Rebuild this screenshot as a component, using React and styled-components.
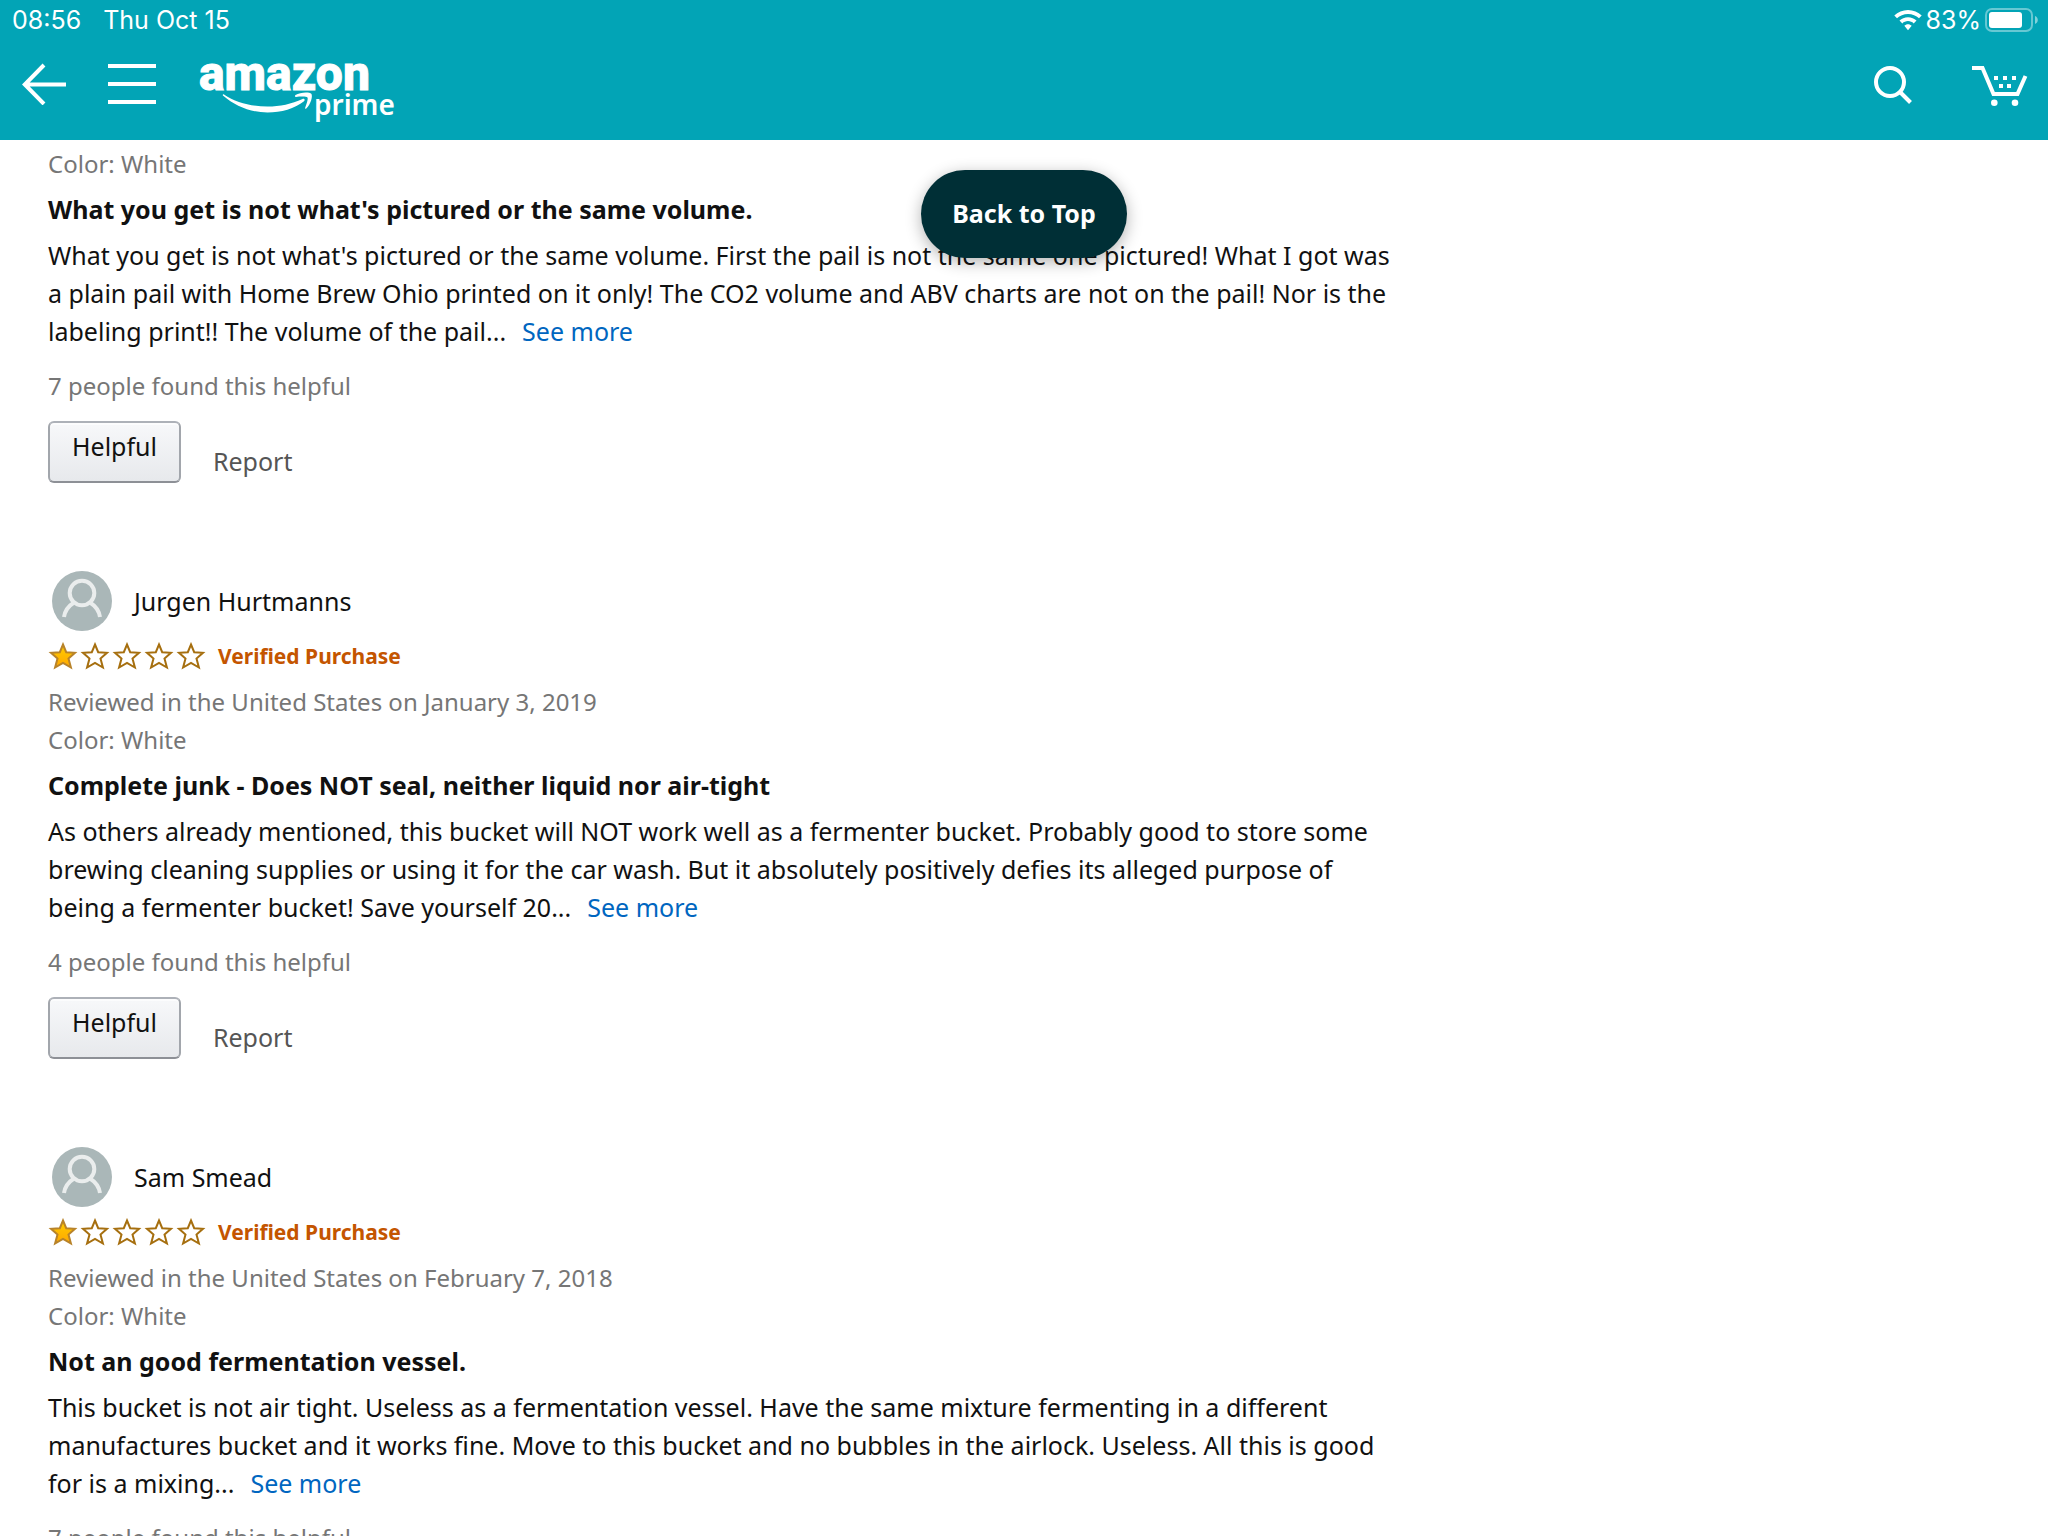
import React from 'react';
import styled, { createGlobalStyle, css } from 'styled-components';

const GlobalStyle = createGlobalStyle`
  * {
    box-sizing: border-box;
  }

  body {
    margin: 0;
    background: #fff;
    color: #111;
    font-family: "Noto Sans", "Open Sans", sans-serif;
    font-size: 25px;
    line-height: 38px;
  }

  h3, p {
    margin: 0;
  }

  svg {
    display: block;
  }
`;

const resetButton = css`
  padding: 0;
  border: 0;
  background: none;
  color: inherit;
  font: inherit;
  cursor: pointer;
`;

const Screen = styled.div`
  display: flex;
  flex-direction: column;
  height: 100vh;
`;

const Header = styled.header`
  flex: none;
  padding-bottom: 12px;
  background: #02a4b6;
  color: #fff;
`;

const StatusBar = styled.div`
  display: flex;
  justify-content: space-between;
  height: 40px;
  padding: 0 10px 0 12px;
  font-family: Inter, sans-serif;
  font-size: 25px;
  line-height: 40px;
`;

const StatusGroup = styled.div`
  display: flex;
  align-items: center;
  gap: ${p => p.gap}px;
`;

const NavBar = styled.nav`
  display: flex;
  align-items: center;
  justify-content: space-between;
  height: 88px;
  padding: 0 20px 0 22px;
`;

const NavGroup = styled.div`
  display: flex;
  align-items: center;
  gap: ${p => p.gap}px;
`;

const IconButton = styled.button`
  ${resetButton};
`;

const LogoLink = styled.a`
  color: inherit;
`;

const LogoText = styled.text`
  fill: currentColor;
  stroke: currentColor;
  stroke-width: ${p => p.sub ? 0 : 1}px;
  font-family: ${p => p.sub ? '"Noto Sans"' : 'Roboto'}, sans-serif;
  font-size: ${p => p.sub ? 28 : 48}px;
  font-weight: ${p => p.sub ? 600 : 800};
`;

const TopAnchor = styled.div`
  position: absolute;
  top: 170px;
  left: 0;
  right: 0;
  display: flex;
  justify-content: center;
  pointer-events: none;
`;

const TopButton = styled.button`
  ${resetButton};
  height: 88px;
  padding: 0 31px 3px;
  border-radius: 44px;
  background: #002f36;
  box-shadow: 0 4px 16px rgba(0, 0, 0, 0.3);
  color: #fff;
  font-weight: 700;
  pointer-events: auto;
`;

const Reviews = styled.main`
  flex: 1;
  min-height: 0;
  padding: 5px 48px 0;
  overflow-y: auto;
  scrollbar-width: none;
`;

const Review = styled.article`
  margin-bottom: 88px;
`;

const Profile = styled.div`
  display: flex;
  align-items: center;
  gap: 22px;
  margin: 0 4px 6px;
`;

const Rating = styled.div`
  display: flex;
  align-items: center;
  gap: 12px;
  margin-bottom: 8px;
`;

const Stars = styled.div`
  display: flex;
  gap: 2px;
`;

const Verified = styled.span`
  color: #c45500;
  font-size: 21px;
  font-weight: 700;
`;

const Meta = styled.p`
  color: #767676;
  font-size: 24px;
`;

const Title = styled.h3`
  margin: 7px 0 8px;
  font-size: 25px;
  font-weight: 700;
`;

const Body = styled.p`
  margin-bottom: 17px;
  white-space: pre-line;
`;

const SeeMore = styled.a`
  margin-left: 16px;
  color: #0066c0;
  text-decoration: none;
`;

const Actions = styled.div`
  display: flex;
  gap: 32px;
  margin-top: 16px;
`;

const HelpfulButton = styled.button`
  ${resetButton};
  height: 62px;
  padding: 0 22px 13px;
  border: 2px solid #a2a6ac;
  border-color: #adb1b8 #a2a6ac #8d9096;
  border-radius: 6px;
  background: linear-gradient(#f7f8fa, #e7e9ec);
  box-shadow: inset 0 2px 0 rgba(255, 255, 255, 0.6);
`;

const ReportLink = styled.a`
  padding-top: 21px;
  color: #555;
  text-decoration: none;
`;

const WifiIcon = () => (
  <svg width="28" height="21" viewBox="0 0 28 21" fill="currentColor">
    <path d="M14 0C8.700 0 3.800 2.100 0.300 5.500L3 8.300C5.800 5.600 9.700 4 14 4s8.200 1.600 11 4.300l2.700-2.800C24.200 2.100 19.300 0 14 0z" />
    <path d="M14 7.200c-3.300 0-6.300 1.300-8.500 3.400l2.800 2.800c1.500-1.400 3.500-2.300 5.700-2.300s4.200.9 5.700 2.300l2.800-2.800c-2.200-2.100-5.200-3.400-8.500-3.400z" />
    <path d="M14 14.200c-1.400 0-2.700.6-3.700 1.500L14 20.300l3.700-4.600c-1-.9-2.300-1.500-3.700-1.500z" />
  </svg>
);

const BatteryIcon = () => (
  <svg width="53" height="24" viewBox="0 0 53 24">
    <rect x="1" y="1" width="46" height="22" rx="6" fill="none" stroke="#fff" strokeOpacity="0.4" strokeWidth="2" />
    <rect x="4" y="4" width="33" height="16" rx="3" fill="#fff" />
    <path d="M50 8c1.700.6 2.800 2.200 2.800 4s-1.100 3.400-2.800 4z" fill="#fff" fillOpacity="0.5" />
  </svg>
);

const BackIcon = () => (
  <svg width="44" height="42" viewBox="0 0 44 42" fill="none" stroke="currentColor" strokeWidth="4">
    <path d="M44 21.500H3M22 2L2.800 21.500L22 41" />
  </svg>
);

const MenuIcon = () => (
  <svg width="48" height="40" viewBox="0 0 48 40" fill="none" stroke="currentColor" strokeWidth="4">
    <path d="M0 2h48M0 20h48M0 38h48" />
  </svg>
);

const SearchIcon = () => (
  <svg width="40" height="40" viewBox="0 0 40 40" fill="none" stroke="currentColor" strokeWidth="4">
    <circle cx="17" cy="18" r="14" />
    <path d="M26.500 27.500L37.500 38.500" />
  </svg>
);

const CartIcon = () => (
  <svg width="56" height="42" viewBox="0 0 56 42" fill="none" overflow="visible">
    <path d="M0 5h10.500L21.500 31H45.500L53.500 13" stroke="currentColor" strokeWidth="4" />
    <path d="M22 13h4v4h-4zM31 13h4v4h-4zM40 13h4v4h-4zM27 21h4v4h-4zM35 21h4v4h-4z" fill="currentColor" />
    <circle cx="22.300" cy="39.700" r="3.300" fill="currentColor" />
    <circle cx="43" cy="39.700" r="3.300" fill="currentColor" />
  </svg>
);

const Logo = () => (
  <svg width="200" height="76" viewBox="0 0 200 76" overflow="visible">
    <LogoText x="1" y="44">amazon</LogoText>
    <LogoText sub x="116" y="69">prime</LogoText>
    <path
      d="M26 48.500c12 8 27 12 43.500 12 12.500 0 24-2.500 35-7.500 1.700-.8 3 .8 1.500 2.200-9 7.300-23 11.300-36.500 11.300-17 0-32.500-6.500-44.300-16.700-.9-.9-.3-1.900.8-1.300z"
      fill="currentColor"
    />
    <path
      d="M97.500 49c4.500-3 14-3.300 15.800-1.200 1.700 2.200-.5 10.700-5 14.700-.8.700-1.500.3-1.200-.5 1.100-2.800 3.300-9 2.400-10.400-1-1.400-7.500-1-11.400-.6-1.300.1-1.600-1.200-.6-2z"
      fill="currentColor"
    />
  </svg>
);

const Avatar = () => (
  <svg width="60" height="60" viewBox="0 0 60 60" fill="none">
    <circle cx="30" cy="30" r="30" fill="#aab7b8" />
    <g stroke="#eaeded" strokeWidth="4">
      <circle cx="30" cy="22" r="12.300" />
      <path d="M12 46c.9-6 4.400-11 9.700-14.300M48 46c-.9-6-4.400-11-9.700-14.300" />
    </g>
  </svg>
);

const Star = ({ filled }) => (
  <svg width="30" height="28" viewBox="0 0 30 28">
    <defs>
      <linearGradient id="starFill" x1="0" y1="0" x2="0" y2="1">
        <stop offset="0" stopColor="#ffce00" />
        <stop offset="1" stopColor="#ffa700" />
      </linearGradient>
    </defs>
    <path
      d="M15 2.500L18.200 10.200L27 10.800L20.500 16.600L22.900 25.500L15 21L7.100 25.500L9.500 16.600L3 10.800L11.800 10.200Z"
      fill={filled ? 'url(#starFill)' : '#fff'}
      stroke={filled ? '#b8832a' : '#a66f0f'}
      strokeWidth="2"
    />
  </svg>
);

const reviews = [
  {
    title: "What you get is not what's pictured or the same volume.",
    text: "What you get is not what's pictured or the same volume. First the pail is not the same one pictured! What I got was\na plain pail with Home Brew Ohio printed on it only! The CO2 volume and ABV charts are not on the pail! Nor is the\nlabeling print!! The volume of the pail...",
    helpful: 7,
  },
  {
    author: 'Jurgen Hurtmanns',
    date: 'January 3, 2019',
    title: 'Complete junk - Does NOT seal, neither liquid nor air-tight',
    text: 'As others already mentioned, this bucket will NOT work well as a fermenter bucket. Probably good to store some\nbrewing cleaning supplies or using it for the car wash. But it absolutely positively defies its alleged purpose of\nbeing a fermenter bucket! Save yourself 20...',
    helpful: 4,
  },
  {
    author: 'Sam Smead',
    date: 'February 7, 2018',
    title: 'Not an good fermentation vessel.',
    text: 'This bucket is not air tight. Useless as a fermentation vessel. Have the same mixture fermenting in a different\nmanufactures bucket and it works fine. Move to this bucket and no bubbles in the airlock. Useless. All this is good\nfor is a mixing...',
    helpful: 7,
  },
];

const ReviewHead = ({ author, date }) => (
  <>
    <Profile>
      <Avatar />
      <span>{author}</span>
    </Profile>
    <Rating>
      <Stars role="img" aria-label="1 out of 5 stars">
        {[1, 2, 3, 4, 5].map(n => <Star key={n} filled={n === 1} />)}
      </Stars>
      <Verified>Verified Purchase</Verified>
    </Rating>
    <Meta>Reviewed in the United States on {date}</Meta>
  </>
);

const ReviewItem = ({ author, date, title, text, helpful }) => (
  <Review>
    {author && <ReviewHead author={author} date={date} />}
    <Meta>Color: White</Meta>
    <Title>{title}</Title>
    <Body>
      {text}
      <SeeMore href="#more">See more</SeeMore>
    </Body>
    <Meta>{helpful} people found this helpful</Meta>
    <Actions>
      <HelpfulButton type="button">Helpful</HelpfulButton>
      <ReportLink href="#report">Report</ReportLink>
    </Actions>
  </Review>
);

const App = () => (
  <Screen>
    <GlobalStyle />
    <Header>
      <StatusBar>
        <StatusGroup gap={22}>
          <span>08:56</span>
          <span>Thu Oct 15</span>
        </StatusGroup>
        <StatusGroup gap={4}>
          <WifiIcon />
          <span>83%</span>
          <BatteryIcon />
        </StatusGroup>
      </StatusBar>
      <NavBar>
        <NavGroup gap={42}>
          <IconButton aria-label="Back"><BackIcon /></IconButton>
          <IconButton aria-label="Menu"><MenuIcon /></IconButton>
          <LogoLink href="#home" aria-label="Home"><Logo /></LogoLink>
        </NavGroup>
        <NavGroup gap={59}>
          <IconButton aria-label="Search"><SearchIcon /></IconButton>
          <IconButton aria-label="Cart"><CartIcon /></IconButton>
        </NavGroup>
      </NavBar>
    </Header>
    <Reviews>
      {reviews.map(review => <ReviewItem key={review.title} {...review} />)}
    </Reviews>
    <TopAnchor>
      <TopButton type="button">Back to Top</TopButton>
    </TopAnchor>
  </Screen>
);

export default App;
